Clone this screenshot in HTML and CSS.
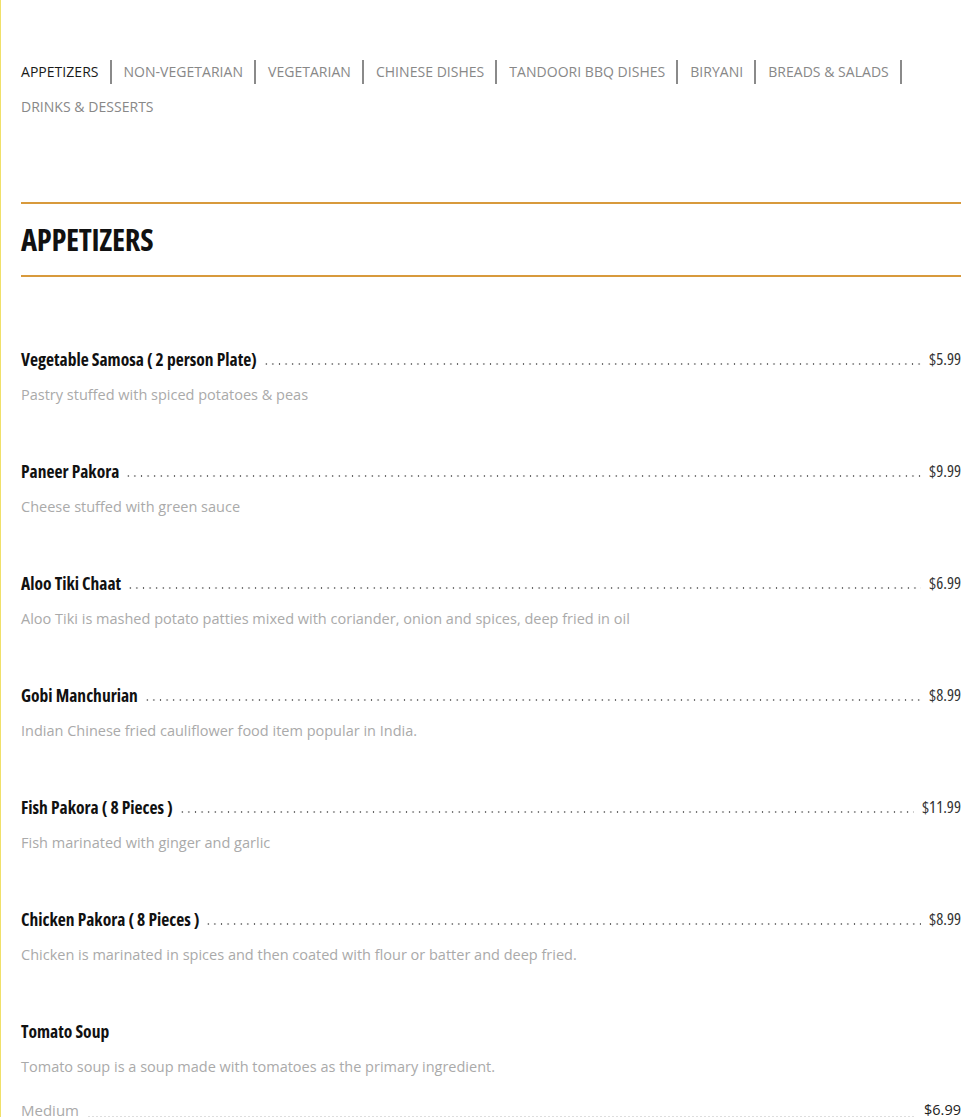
FILE: index.html
```html
<!DOCTYPE html>
<html lang="en">
<head>
<meta charset="utf-8">
<title>Menu</title>
<link rel="stylesheet" href="styles.css">
</head>
<body>
<div class="page">
  <nav class="tabs">
    <ul>
      <li class="tab active">APPETIZERS</li>
      <li class="tab">NON-VEGETARIAN</li>
      <li class="tab">VEGETARIAN</li>
      <li class="tab">CHINESE DISHES</li>
      <li class="tab">TANDOORI BBQ DISHES</li>
      <li class="tab">BIRYANI</li>
      <li class="tab">BREADS &amp; SALADS</li>
      <li class="tab last">DRINKS &amp; DESSERTS</li>
    </ul>
  </nav>

  <section class="menu">
    <header class="menu-head"><h2>APPETIZERS</h2></header>

    <div class="items">
      <div class="item">
        <div class="row"><span class="name">Vegetable Samosa ( 2 person Plate)</span><span class="dots"></span><span class="price">$5.99</span></div>
        <p class="desc">Pastry stuffed with spiced potatoes &amp; peas</p>
      </div>
      <div class="item">
        <div class="row"><span class="name">Paneer Pakora</span><span class="dots"></span><span class="price">$9.99</span></div>
        <p class="desc">Cheese stuffed with green sauce</p>
      </div>
      <div class="item">
        <div class="row"><span class="name">Aloo Tiki Chaat</span><span class="dots"></span><span class="price">$6.99</span></div>
        <p class="desc">Aloo Tiki is mashed potato patties mixed with coriander, onion and spices, deep fried in oil</p>
      </div>
      <div class="item">
        <div class="row"><span class="name">Gobi Manchurian</span><span class="dots"></span><span class="price">$8.99</span></div>
        <p class="desc">Indian Chinese fried cauliflower food item popular in India.</p>
      </div>
      <div class="item">
        <div class="row"><span class="name">Fish Pakora ( 8 Pieces )</span><span class="dots"></span><span class="price">$11.99</span></div>
        <p class="desc">Fish marinated with ginger and garlic</p>
      </div>
      <div class="item">
        <div class="row"><span class="name">Chicken Pakora ( 8 Pieces )</span><span class="dots"></span><span class="price">$8.99</span></div>
        <p class="desc">Chicken is marinated in spices and then coated with flour or batter and deep fried.</p>
      </div>
      <div class="item">
        <div class="row"><span class="name">Tomato Soup</span></div>
        <p class="desc">Tomato soup is a soup made with tomatoes as the primary ingredient.</p>
        <div class="variant"><span class="vname">Medium</span><span class="vdots"></span><span class="vprice">$6.99</span></div>
      </div>
    </div>
  </section>
</div>
</body>
</html>
```

FILE: styles.css
```css
html, body {
  margin: 0;
  padding: 0;
  background: #fff;
}

.page {
  border-left: 1px solid #f0e06a;
  padding: 0 4px 0 20px;
  min-height: 1117px;
  font-family: "Open Sans", "Liberation Sans", sans-serif;
}

.tabs ul {
  list-style: none;
  margin: 0;
  padding: 60px 0 0 0;
  display: flex;
  flex-wrap: wrap;
  row-gap: 11px;
}

.tab {
  font-size: 14px;
  letter-spacing: 0.03px;
  line-height: 24px;
  color: #888;
  padding-right: 11px;
  margin-right: 12px;
  border-right: 2px solid #8a8a8a;
}

.tab.active {
  color: #1a1a1a;
}

.tab.last {
  border-right: none;
}

.menu {
  margin-top: 83px;
}

.menu-head {
  border-top: 2px solid #d89a3c;
  border-bottom: 2px solid #d89a3c;
}

.menu-head h2 {
  margin: 0;
  font-family: "Open Sans", "DejaVu Sans", sans-serif;
  font-stretch: 75%;
  font-weight: 700;
  font-size: 30.5px;
  letter-spacing: -0.3px;
  line-height: 71px;
  color: #111;
}

.items {
  padding-top: 70px;
}

.item {
  margin-bottom: 52px;
}

.row {
  display: flex;
  align-items: stretch;
  height: 24px;
}

.name {
  font-family: "Open Sans", "DejaVu Sans", sans-serif;
  font-stretch: 75%;
  font-weight: 700;
  font-size: 17.5px;
  line-height: 24px;
  color: #111;
  white-space: nowrap;
}

.dots {
  flex: 1;
  margin: 0 8px 0 6px;
  background-image: radial-gradient(circle, #666 0.7px, rgba(0,0,0,0) 1.1px);
  background-size: 6.6px 2px;
  background-repeat: repeat-x;
  background-position: left 0 top 16px;
}

.price {
  font-family: "Open Sans", "DejaVu Sans", sans-serif;
  font-stretch: 75%;
  font-weight: 400;
  font-size: 16.6px;
  line-height: 24px;
  color: #333;
  white-space: nowrap;
}

.desc {
  margin: 12px 0 0 0;
  font-size: 14.5px;
  line-height: 24px;
  color: #aaa;
}

.variant {
  display: flex;
  align-items: stretch;
  height: 24px;
  margin-top: 19px;
}

.vname {
  font-size: 15px;
  line-height: 24px;
  color: #aaa;
}

.vdots {
  flex: 1;
  margin: 0 8px;
  background-image: radial-gradient(circle, #ddd 0.7px, rgba(0,0,0,0) 1.1px);
  background-size: 4px 2px;
  background-repeat: repeat-x;
  background-position: left 0 top 18px;
}

.vprice {
  font-size: 14.5px;
  line-height: 24px;
  color: #222;
}
```
